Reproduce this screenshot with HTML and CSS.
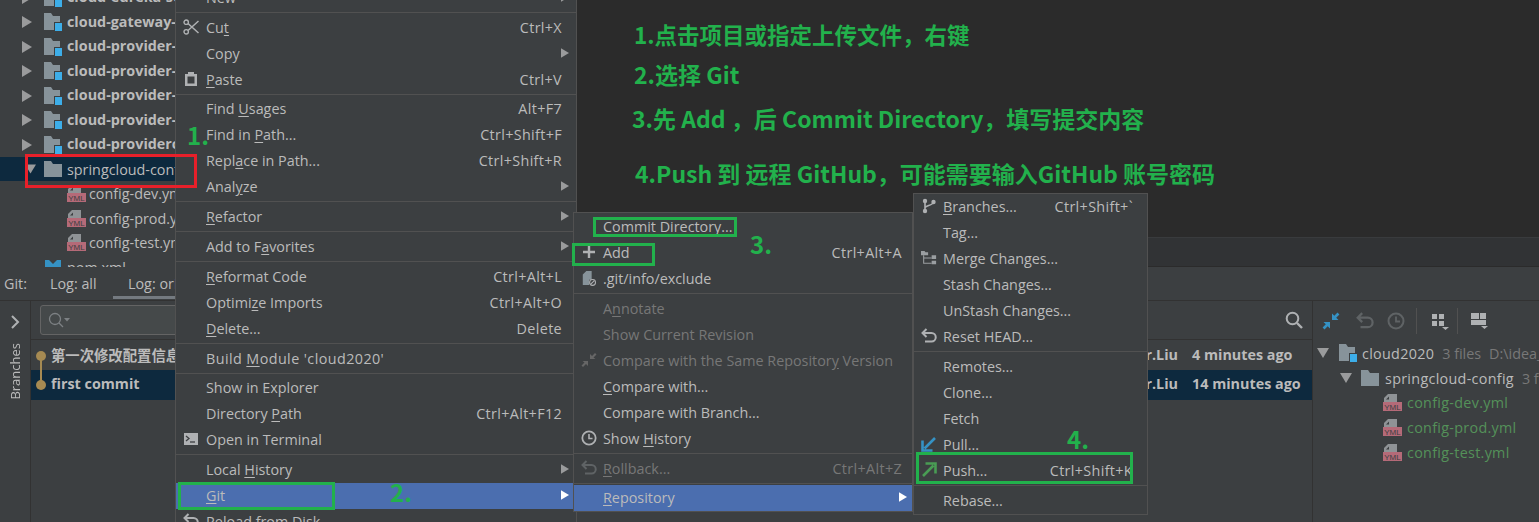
FILE: index.html
```html
<!DOCTYPE html>
<html lang="zh">
<head>
<meta charset="utf-8">
<title>Git menu</title>
<link rel="stylesheet" href="styles.css">
</head>
<body>
<svg class="defs" width="0" height="0">
  <symbol id="folder" viewBox="0 0 18 18"><path d="M0 1h7l2 3h9v13H0z" fill="#87939a"/></symbol>
  <symbol id="module" viewBox="0 0 18 18"><path d="M0 0h7l2 3h7v14H0z" fill="#87939a"/><rect x="10" y="9" width="8" height="9" fill="#3c3f41"/><rect x="11" y="10" width="7" height="8" fill="#3daee9"/></symbol>
  <symbol id="yml" viewBox="0 0 19 19"><path d="M5 1h9v8H1V5z" fill="#8f9396"/><path d="M6 3.500v3H3z" fill="#3c3f41"/><rect y="9" width="19" height="9" fill="#b56a78"/><text x="9.500" y="16.500" text-anchor="middle" font-family="Liberation Sans" font-size="8" fill="#3c3f41">YML</text></symbol>
  <symbol id="arrow-right" viewBox="0 0 10 12"><path d="M0 0l10 6-10 6z" fill="#9a9b9c"/></symbol>
  <symbol id="arrow-down" viewBox="0 0 12 10"><path d="M0 0h12L6 10z" fill="#9a9b9c"/></symbol>
  <symbol id="undo" viewBox="0 0 16 16"><path d="M5.500 1L1.500 5l4 4M2 5h8.500a4 4 0 0 1 0 8.500H4" fill="none" stroke="currentColor" stroke-width="2"/></symbol>
  <symbol id="clock" viewBox="0 0 18 18"><circle cx="9" cy="9" r="7.500" fill="none" stroke="currentColor" stroke-width="2"/><path d="M9 4.500V9.500h4" fill="none" stroke="currentColor" stroke-width="1.800"/></symbol>
  <symbol id="collapse" viewBox="0 0 18 18"><path d="M10 8V1.500l2.300 2.300 3.200-3.200 1.900 1.900-3.200 3.200L16.500 8zM8 10v6.500l-2.300-2.300-3.200 3.200-1.900-1.900 3.200-3.200L1.500 10z" fill="#3592c4"/></symbol>
</svg>

<div class="app">
  <div class="top">
    <div class="tree">
      <div class="tree-clip">
        <div class="tr"><svg class="tw"><use href="#arrow-right"/></svg><svg class="fi"><use href="#module"/></svg><b>cloud-eureka-server7001</b></div>
        <div class="tr"><svg class="tw"><use href="#arrow-right"/></svg><svg class="fi"><use href="#module"/></svg><b>cloud-gateway-gateway9527</b></div>
        <div class="tr"><svg class="tw"><use href="#arrow-right"/></svg><svg class="fi"><use href="#module"/></svg><b>cloud-provider-hystrix</b></div>
        <div class="tr"><svg class="tw"><use href="#arrow-right"/></svg><svg class="fi"><use href="#module"/></svg><b>cloud-provider-payment</b></div>
        <div class="tr"><svg class="tw"><use href="#arrow-right"/></svg><svg class="fi"><use href="#module"/></svg><b>cloud-provider-payment</b></div>
        <div class="tr"><svg class="tw"><use href="#arrow-right"/></svg><svg class="fi"><use href="#module"/></svg><b>cloud-provider-payment</b></div>
        <div class="tr"><svg class="tw"><use href="#arrow-right"/></svg><svg class="fi"><use href="#module"/></svg><b>cloud-providerconsul</b></div>
        <div class="tr tr-sel"><svg class="tw"><use href="#arrow-down"/></svg><svg class="fi"><use href="#folder"/></svg><span>springcloud-config</span></div>
        <div class="tr tr-file"><svg class="fy"><use href="#yml"/></svg><span>config-dev.yml</span></div>
        <div class="tr tr-file"><svg class="fy"><use href="#yml"/></svg><span>config-prod.yml</span></div>
        <div class="tr tr-file"><svg class="fy"><use href="#yml"/></svg><span>config-test.yml</span></div>
        <div class="tr tr-pom"><svg class="fi" viewBox="0 0 18 18"><path d="M1 2h4l4 4 4-4h4v8H1z" fill="#3592c4"/></svg><span>pom.xml</span></div>
      </div>
    </div>
    <div class="right-top">
      <div class="editor">
        <p class="note n1">1.点击项目或指定上传文件，右键</p>
        <p class="note n2">2.选择 Git</p>
        <p class="note n3">3.先 Add ，后 Commit Directory，填写提交内容</p>
        <p class="note n4">4.Push 到 远程 GitHub，可能需要输入GitHub 账号密码</p>
      </div>
      <div class="editor-strip"></div>
    </div>
  </div>

  <div class="tabs">
    <span class="tab-label">Git:</span>
    <span class="tab">Log: all</span>
    <span class="tab tab-on">Log: origin/master</span>
  </div>

  <div class="log">
    <div class="strip">
      <svg class="chev" viewBox="0 0 10 14"><path d="M2 1l6 6-6 6" fill="none" stroke="#afb1b3" stroke-width="2"/></svg>
      <span class="vtext">Branches</span>
    </div>
    <div class="log-main">
      <div class="log-bar">
        <div class="search"><svg class="sicon" viewBox="0 0 22 16"><circle cx="7" cy="7" r="5.500" fill="none" stroke="#7d8184" stroke-width="1.300"/><path d="M11 11l4 4" stroke="#7d8184" stroke-width="1.300"/><path d="M16 6h6l-3 3.500z" fill="#7d8184"/></svg></div>
        <svg class="magnifier" viewBox="0 0 18 18"><circle cx="7.500" cy="7.500" r="5.800" fill="none" stroke="#afb1b3" stroke-width="2"/><path d="M12 12l5 5" stroke="#afb1b3" stroke-width="2.400"/></svg>
      </div>
      <div class="commit commit-first">
        <svg class="graph" viewBox="0 0 20 30"><path d="M10 15v15" stroke="#a68a52" stroke-width="2"/><circle cx="10" cy="15" r="5" fill="#a68a52"/></svg>
        <b class="msg">第一次修改配置信息</b><b class="author">Mr.Liu</b><b class="date">4 minutes ago</b>
      </div>
      <div class="commit commit-sel">
        <svg class="graph" viewBox="0 0 20 30"><path d="M10 0v15" stroke="#a68a52" stroke-width="2"/><circle cx="10" cy="15" r="5" fill="#a68a52"/></svg>
        <b class="msg">first commit</b><b class="author">Mr.Liu</b><b class="date">14 minutes ago</b>
      </div>
    </div>
    <div class="changes">
      <div class="ch-bar">
        <svg class="ci ci-first"><use href="#collapse"/></svg>
        <svg class="ci ci-dim"><use href="#undo"/></svg>
        <svg class="ci ci-dim ci-last"><use href="#clock"/></svg>
        <i class="bar-sep"></i>
        <svg class="ci ci-wide" viewBox="0 0 20 18"><path d="M2 2h5v5H2zM9 2h5v5H9zM2 9h5v5H2zM9 9h5v5H9zM12 15h7l-3.500 3z" fill="#afb1b3"/></svg>
        <i class="bar-sep bar-sep-n"></i>
        <svg class="ci ci-wide" viewBox="0 0 20 18"><path d="M1 1h8v6H1zM10 1h6v6h-6zM1 8h15v5H1zM11 14h7l-3.500 3z" fill="#afb1b3"/></svg>
      </div>
      <div class="ch-row ch-root"><svg class="tw"><use href="#arrow-down"/></svg><svg class="fi"><use href="#module"/></svg><span>cloud2020</span><em>3 files</em><em>D:\idea_workspace\cloud2020</em></div>
      <div class="ch-row ch-dir"><svg class="tw"><use href="#arrow-down"/></svg><svg class="fi"><use href="#folder"/></svg><span>springcloud-config</span><em>3 files</em></div>
      <div class="ch-row ch-file"><svg class="fy"><use href="#yml"/></svg><span>config-dev.yml</span></div>
      <div class="ch-row ch-file"><svg class="fy"><use href="#yml"/></svg><span>config-prod.yml</span></div>
      <div class="ch-row ch-file"><svg class="fy"><use href="#yml"/></svg><span>config-test.yml</span></div>
    </div>
  </div>

  <div class="menu m1">
    <div class="mi"><span>New</span><svg class="sub"><use href="#arrow-right"/></svg></div>
    <div class="sep"></div>
    <div class="mi"><svg class="ico" viewBox="0 0 16 16"><circle cx="3.200" cy="3.200" r="2.200" fill="none" stroke="#afb1b3" stroke-width="1.400"/><circle cx="3.200" cy="12.800" r="2.200" fill="none" stroke="#afb1b3" stroke-width="1.400"/><path d="M5 4.500L15.500 14M5 11.500L15.500 2" stroke="#afb1b3" stroke-width="1.500"/></svg><span>Cu<u>t</u></span><kbd>Ctrl+X</kbd></div>
    <div class="mi"><span>Copy</span><svg class="sub"><use href="#arrow-right"/></svg></div>
    <div class="mi"><svg class="ico" viewBox="0 0 16 16"><path d="M2 3h12v12H2zM4.500 5.500v7h7v-7z" fill="#afb1b3" fill-rule="evenodd"/><rect x="5" y="1" width="6" height="3" fill="#afb1b3"/></svg><span><u>P</u>aste</span><kbd>Ctrl+V</kbd></div>
    <div class="sep sep-s"></div>
    <div class="mi"><span>Find <u>U</u>sages</span><kbd>Alt+F7</kbd></div>
    <div class="mi"><span>Find in <u>P</u>ath...</span><kbd>Ctrl+Shift+F</kbd></div>
    <div class="mi"><span>Repl<u>a</u>ce in Path...</span><kbd>Ctrl+Shift+R</kbd></div>
    <div class="mi"><span>Anal<u>y</u>ze</span><svg class="sub"><use href="#arrow-right"/></svg></div>
    <div class="sep"></div>
    <div class="mi"><span><u>R</u>efactor</span><svg class="sub"><use href="#arrow-right"/></svg></div>
    <div class="sep"></div>
    <div class="mi"><span>Add to F<u>a</u>vorites</span><svg class="sub"><use href="#arrow-right"/></svg></div>
    <div class="sep"></div>
    <div class="mi"><span><u>R</u>eformat Code</span><kbd>Ctrl+Alt+L</kbd></div>
    <div class="mi"><span>Optimi<u>z</u>e Imports</span><kbd>Ctrl+Alt+O</kbd></div>
    <div class="mi"><span><u>D</u>elete...</span><kbd>Delete</kbd></div>
    <div class="sep"></div>
    <div class="mi"><span class="wide">Build <u>M</u>odule 'cloud2020'</span></div>
    <div class="sep sep-s"></div>
    <div class="mi"><span>Show in Explorer</span></div>
    <div class="mi"><span>Directory <u>P</u>ath</span><kbd>Ctrl+Alt+F12</kbd></div>
    <div class="mi"><svg class="ico" viewBox="0 0 16 16"><path d="M1 2h14v12H1z" fill="#afb1b3"/><path d="M3 5l3 2.500L3 10" fill="none" stroke="#3c3f41" stroke-width="1.300"/><path d="M7 11h5" stroke="#3c3f41" stroke-width="1.300"/></svg><span>Open in Terminal</span></div>
    <div class="sep"></div>
    <div class="mi"><span>Local <u>H</u>istory</span><svg class="sub"><use href="#arrow-right"/></svg></div>
    <div class="mi mi-on"><span><u>G</u>it</span><svg class="sub sub-on"><use href="#arrow-right"/></svg></div>
    <div class="mi"><svg class="ico" viewBox="0 0 16 16"><use href="#undo"/></svg><span>Reload from Disk</span></div>
  </div>

  <div class="menu m2">
    <div class="mi"><span>Commit Directory...</span></div>
    <div class="mi"><svg class="ico" viewBox="0 0 16 16"><path d="M8 2v12M2 8h12" stroke="#afb1b3" stroke-width="2.400"/></svg><span>Add</span><kbd>Ctrl+Alt+A</kbd></div>
    <div class="mi"><svg class="ico" viewBox="0 0 16 18"><path d="M1 5l4-4h6v10H8v6H1z" fill="#87939a"/><circle cx="12" cy="14" r="3.300" fill="none" stroke="#afb1b3" stroke-width="1.200"/><path d="M10 16l4-4" stroke="#afb1b3" stroke-width="1.200"/></svg><span>.git/info/exclude</span></div>
    <div class="sep"></div>
    <div class="mi dis"><span>A<u>n</u>notate</span></div>
    <div class="mi dis"><span>Show Current Revision</span></div>
    <div class="mi dis"><svg class="ico" viewBox="0 0 16 16"><path d="M9 7V2l2 2 3-3 1.500 1.500-3 3 2 1.500zM7 9v5l-2-2-3 3-1.500-1.500 3-3-2-1.500z" fill="#666"/></svg><span>Compare with the Same Repositor<u>y</u> Version</span></div>
    <div class="mi"><span><u>C</u>ompare with...</span></div>
    <div class="mi"><span>Compare with Branch...</span></div>
    <div class="mi"><svg class="ico" viewBox="0 0 18 18"><use href="#clock"/></svg><span>Show <u>H</u>istory</span></div>
    <div class="sep"></div>
    <div class="mi dis"><svg class="ico dim" viewBox="0 0 16 16"><use href="#undo"/></svg><span><u>R</u>ollback...</span><kbd>Ctrl+Alt+Z</kbd></div>
    <div class="sep sep-s"></div>
    <div class="mi mi-on"><span><u>R</u>epository</span><svg class="sub sub-on"><use href="#arrow-right"/></svg></div>
  </div>

  <div class="menu m3">
    <div class="mi"><svg class="ico" viewBox="0 0 16 16"><circle cx="4" cy="3" r="2.200" fill="#afb1b3"/><circle cx="4" cy="13" r="2.200" fill="#afb1b3"/><circle cx="12.500" cy="4" r="2.200" fill="#afb1b3"/><path d="M4 3v10M4 10c0-3 8-2 8.500-6" fill="none" stroke="#afb1b3" stroke-width="1.600"/></svg><span><u>B</u>ranches...</span><kbd>Ctrl+Shift+`</kbd></div>
    <div class="mi"><span>Tag...</span></div>
    <div class="mi"><svg class="ico" viewBox="0 0 18 16"><path d="M0 0h4l1 1.500h3V5H0zM12 5h5v4h-5zM12 11h5v4h-5z" fill="#9a9ea1"/><path d="M3 5v9h9M3 8h9" fill="none" stroke="#9a9ea1" stroke-width="1.200"/></svg><span>Merge Changes...</span></div>
    <div class="mi"><span>Stash Changes...</span></div>
    <div class="mi"><span>UnStash Changes...</span></div>
    <div class="mi"><svg class="ico" viewBox="0 0 16 16"><use href="#undo"/></svg><span>Reset HEAD...</span></div>
    <div class="sep"></div>
    <div class="mi"><span>Remotes...</span></div>
    <div class="mi"><span>Clone...</span></div>
    <div class="mi"><span>Fetch</span></div>
    <div class="mi"><svg class="ico" viewBox="0 0 16 16"><path d="M14 2L3.500 12.500M1.500 4.500v10h10" fill="none" stroke="#3592c4" stroke-width="2.600"/></svg><span>Pull...</span></div>
    <div class="mi"><svg class="ico" viewBox="0 0 16 16"><path d="M2 14L12.500 3.500M4.500 1.500h10v10" fill="none" stroke="#499c54" stroke-width="2.600"/></svg><span>Push...</span><kbd>Ctrl+Shift+K</kbd></div>
    <div class="sep"></div>
    <div class="mi"><span>Rebase...</span></div>
  </div>

  <div class="box box-red"></div>
  <div class="box box-git"></div>
  <div class="box box-commit"></div>
  <div class="box box-add"></div>
  <div class="box box-push"></div>
  <b class="step s1">1.</b>
  <b class="step s2">2.</b>
  <b class="step s3">3.</b>
  <b class="step s4">4.</b>
</div>
</body>
</html>
```

FILE: styles.css
```css
* { box-sizing: border-box; }
html, body { margin: 0; padding: 0; background: #3c3f41; }
.defs { position: absolute; }
.app {
  position: relative;
  width: 1539px;
  height: 522px;
  overflow: hidden;
  display: flex;
  flex-direction: column;
  background: #3c3f41;
  color: #bbbbbb;
  font-family: "Open Sans", "Noto Sans CJK SC", sans-serif;
  font-size: 14.350px;
}
.top { display: flex; height: 267px; flex: none; }
.tree { width: 577px; overflow: hidden; flex: none; }
.tree-clip { margin-top: -14.600px; }
.tr { display: flex; align-items: center; height: 24.500px; white-space: nowrap; }
.tr-sel { background: #0d293e; }
.tr b { font-weight: 700; margin-bottom: 2px; }
.tw { width: 10px; height: 12px; margin-left: 22px; flex: none; }
.fi { width: 18px; height: 18px; margin-left: 12px; margin-right: 5px; flex: none; }
.fy { width: 19px; height: 19px; margin-left: 67px; margin-right: 3px; flex: none; }
.tr-pom .fi { margin-left: 44px; }
.tr-sel .tw { margin-left: 25px; width: 11px; height: 10px; }
.tr-sel .fi { margin-left: 8px; }
.right-top { flex: 1; display: flex; flex-direction: column; }
.editor { height: 237px; background: #2b2b2b; padding-left: 55px; flex: none; }
.editor-strip { flex: 1; background: #313335; border-top: 1px solid #393b3d; border-bottom: 1px solid #2b2b2b; }
.note {
  margin: 0;
  color: #22b14c;
  font-family: "Noto Sans CJK SC", sans-serif;
  font-weight: 700;
  font-size: 23px;
  line-height: 30px;
  white-space: nowrap;
}
.n1 { padding-top: 19px; margin-left: 2px; font-size: 22.500px; }
.n2 { padding-top: 10px; margin-left: 2px; }
.n3 { padding-top: 14px; }
.n4 { padding-top: 25px; margin-left: 3px; }

.tabs {
  height: 34px;
  flex: none;
  display: flex;
  align-items: center;
  border-bottom: 1px solid #323232;
  padding-left: 4px;
  white-space: nowrap;
}
.tab-label { width: 46px; }
.tab { width: 78px; }
.tab-on { position: relative; width: 200px; }
.tab-on::after { content: ""; position: absolute; left: -15px; right: 0; bottom: -6px; height: 3px; background: #747a80; }

.log { flex: 1; display: flex; min-height: 0; }
.strip {
  width: 31px;
  flex: none;
  border-right: 1px solid #323232;
  display: flex;
  flex-direction: column;
  align-items: center;
  padding-top: 14px;
}
.chev { width: 10px; height: 14px; }
.vtext {
  writing-mode: vertical-rl;
  transform: rotate(180deg);
  margin-top: 14px;
  font-size: 13px;
}
.log-main { width: 1282px; flex: none; border-right: 1px solid #323232; }
.log-bar {
  height: 39px;
  border-bottom: 1px solid #323232;
  display: flex;
  align-items: center;
  justify-content: space-between;
  padding: 0 9px 0 9px;
}
.search {
  width: 300px;
  height: 30px;
  background: #45494a;
  border: 1px solid #646464;
  border-radius: 3px;
  display: flex;
  align-items: center;
  padding-left: 7px;
}
.sicon { width: 22px; height: 16px; }
.magnifier { width: 18px; height: 18px; }
.commit { height: 30px; display: flex; align-items: center; font-weight: 700; padding-bottom: 3px; }
.commit-first { height: 29px; margin-top: 1px; }
.commit b { font-weight: 700; }
.commit-sel { background: #0d293e; }
.graph { width: 20px; height: 30px; flex: none; margin-bottom: -3px; }
.msg { flex: 1; }
.author { width: 60px; text-align: right; }
.date { width: 120px; margin-left: 14px; }
.changes { flex: 1; overflow: hidden; white-space: nowrap; }
.ch-bar { height: 39px; display: flex; align-items: center; border-bottom: 0; padding-left: 9px; }
.ci { width: 18px; height: 18px; margin-right: 13px; color: #5f6365; flex: none; }
.ci-first { margin-right: 16px; }
.ci-last { margin-right: 11px; }
.ci-wide { width: 20px; margin-right: 7px; }
.bar-sep { width: 1px; height: 26px; background: #515151; margin-right: 13px; }
.bar-sep-n { margin-right: 12px; }
.ch-row { display: flex; align-items: center; height: 24.700px; padding-bottom: 2px; }
.ch-row span { letter-spacing: 0.300px; }
.ch-row em { font-style: normal; color: #787878; margin-left: 8px; }
.ch-root { margin-top: 2px; }
.ch-root .tw { margin-left: 4px; width: 12px; height: 10px; }
.ch-root .fi { margin-left: 10px; margin-right: 5px; }
.ch-dir .tw { margin-left: 27px; width: 12px; height: 10px; }
.ch-dir .fi { margin-left: 9px; margin-right: 6px; }
.ch-file { color: #549159; }
.ch-file .fy { margin-left: 70px; margin-right: 5px; }

.menu {
  position: absolute;
  background: #3c3f41;
  border: 1px solid #515151;
  white-space: nowrap;
}
.m1 { left: 175px; top: -16px; width: 402px; }
.m2 { left: 573px; top: 212px; width: 340px; height: 300px; padding-top: 1px; }
.m3 { left: 913px; top: 193px; width: 235px; height: 322px; }
.mi { display: flex; align-items: center; height: 26px; padding: 0 14px 2px 30px; position: relative; }
.m2 .mi, .m3 .mi { padding-left: 29px; }
.m2 .mi { padding-right: 10px; }
.mi kbd { margin-left: auto; font: inherit; letter-spacing: 0.350px; }
.mi u { text-underline-offset: 2px; }
.wide { letter-spacing: 0.420px; }
.dis { color: #777777; }
.sep { height: 4px; position: relative; }
.sep::after { content: ""; position: absolute; left: 0; right: 0; top: 1px; height: 1px; background: #515151; }
.sep-s { height: 3px; }
.mi-on { background: #4b6eaf; color: #bbbbbb; }
.ico { position: absolute; left: 7px; top: 4px; width: 16px; height: 16px; color: #afb1b3; }
.ico.dim { color: #5f6365; }
.sub { width: 8px; height: 12px; margin-left: auto; margin-right: -7px; }
.m2 .sub { margin-right: -5px; }
.sub-on { filter: brightness(3); }

.box { position: absolute; border: 3px solid #22b14c; }
.box-red { left: 25px; top: 154px; width: 172px; height: 34px; border-color: #e8202a; }
.box-git { left: 178px; top: 482px; width: 157px; height: 28px; }
.box-commit { left: 593px; top: 217px; width: 144px; height: 20px; }
.box-add { left: 572px; top: 243px; width: 83px; height: 23px; }
.box-push { left: 916px; top: 452px; width: 217px; height: 32px; }
.step { position: absolute; color: #22b14c; font-family: "Noto Sans CJK SC", sans-serif; font-weight: 700; font-size: 24px; line-height: 26px; }
.s1 { left: 187px; top: 122px; }
.s2 { left: 390px; top: 479px; }
.s3 { left: 750px; top: 231px; }
.s4 { left: 1067px; top: 426px; }
```
